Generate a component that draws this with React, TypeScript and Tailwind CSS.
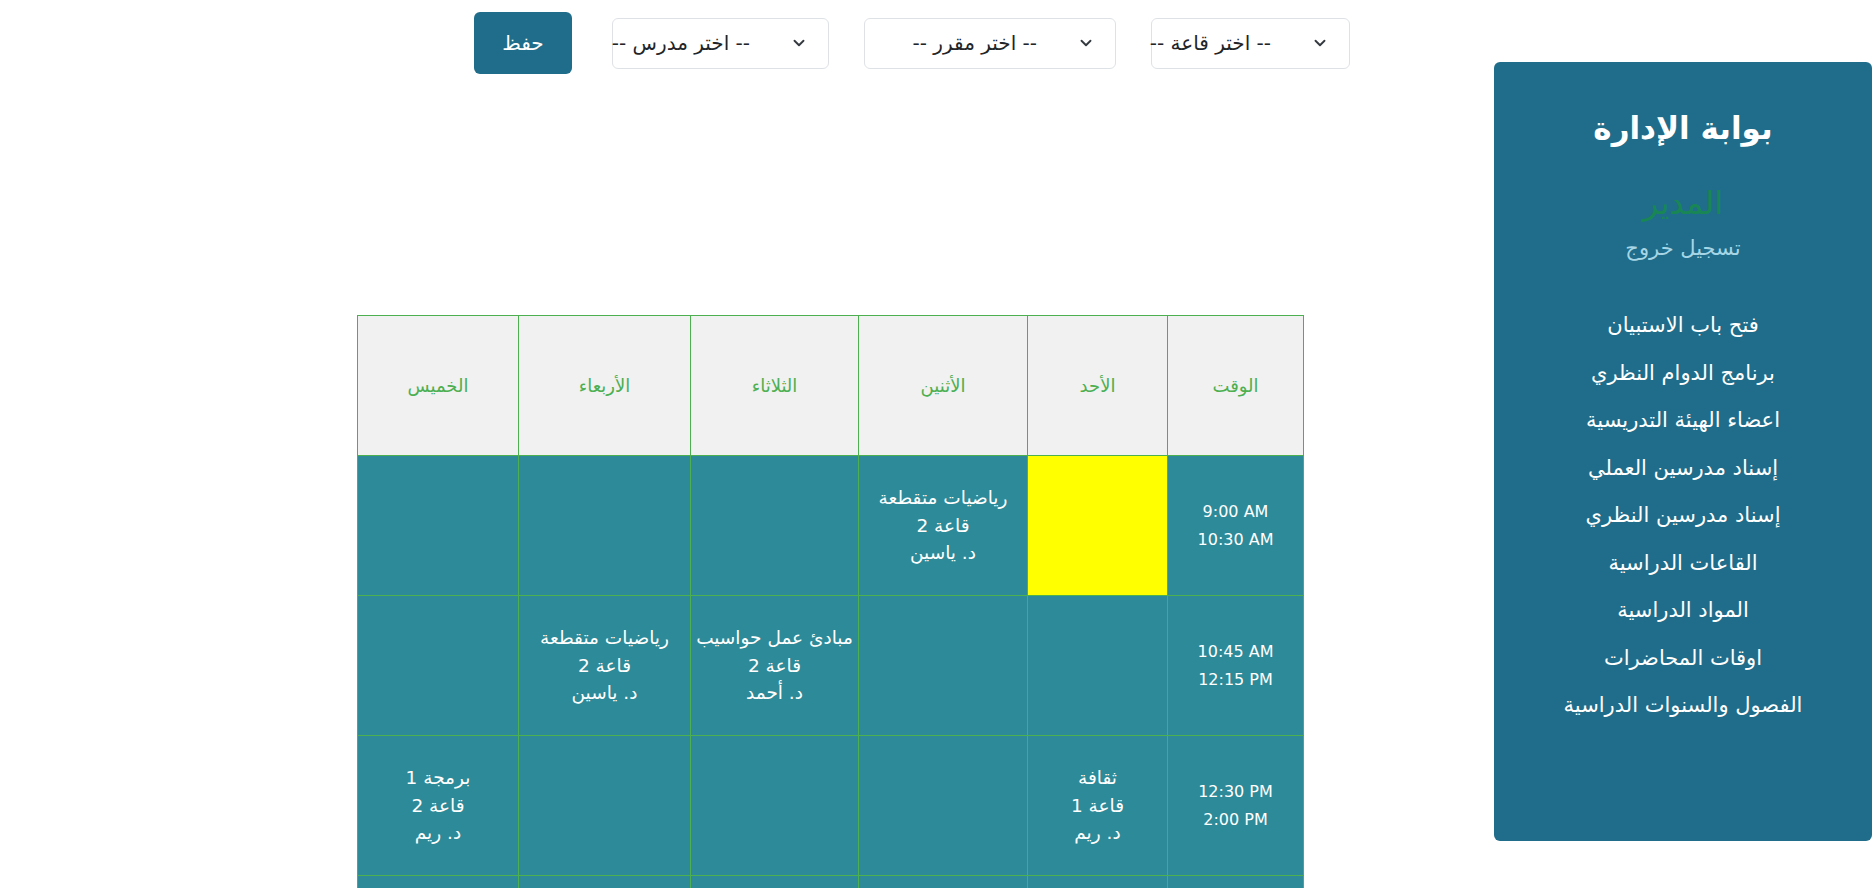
import { ChevronDown } from "lucide-react";

type Slot = { subject: string; room: string; teacher: string } | null;

type Row = {
  from: string;
  to: string;
  cells: Slot[]; // الأحد .. الخميس
  highlight?: number;
};

const DAYS = ["الأحد", "الأثنين", "الثلاثاء", "الأربعاء", "الخميس"];
const DAY_WIDTHS = ["w-[140px]", "w-[169px]", "w-[168px]", "w-[172px]", "w-[161px]"];

const ROWS: Row[] = [
  {
    from: "9:00 AM",
    to: "10:30 AM",
    highlight: 0,
    cells: [
      null,
      { subject: "رياضيات متقطعة", room: "قاعة 2", teacher: "د. ياسين" },
      null,
      null,
      null,
    ],
  },
  {
    from: "10:45 AM",
    to: "12:15 PM",
    cells: [
      null,
      null,
      { subject: "مبادئ عمل حواسيب", room: "قاعة 2", teacher: "د. أحمد" },
      { subject: "رياضيات متقطعة", room: "قاعة 2", teacher: "د. ياسين" },
      null,
    ],
  },
  {
    from: "12:30 PM",
    to: "2:00 PM",
    cells: [
      { subject: "ثقافة", room: "قاعة 1", teacher: "د. ريم" },
      null,
      null,
      null,
      { subject: "برمجة 1", room: "قاعة 2", teacher: "د. ريم" },
    ],
  },
  // next slot sits below the fold
  { from: "", to: "", cells: [null, null, null, null, null] },
];

const MENU = [
  "فتح باب الاستبيان",
  "برنامج الدوام النظري",
  "اعضاء الهيئة التدريسية",
  "إسناد مدرسين العملي",
  "إسناد مدرسين النظري",
  "القاعات الدراسية",
  "المواد الدراسية",
  "اوقات المحاضرات",
  "الفصول والسنوات الدراسية",
];

function FakeSelect({ label, width }: { label: string; width: string }) {
  return (
    <div
      className={`${width} h-[51px] flex items-center gap-[40px] pr-[20px] border border-[#dee2e6] rounded-md bg-white text-[#212529] text-[20px]`}
    >
      <ChevronDown size={18} strokeWidth={2.5} className="text-[#343a40] shrink-0" />
      <span className="whitespace-nowrap">{label}</span>
    </div>
  );
}

export default function App() {
  return (
    <div
      dir="rtl"
      className="flex items-start min-h-screen bg-white font-['Segoe_UI','DejaVu_Sans',sans-serif]"
    >
      <aside className="shrink-0 mt-[62px] mr-px w-[378px] h-[779px] rounded-md bg-[#1f6d8a] flex flex-col items-center text-center">
        <h2 className="mt-[45px] text-[31px] leading-[43px] font-semibold text-white">
          بوابة الإدارة
        </h2>
        <div className="mt-[36px] text-[32px] leading-[34px] text-[#198754]">المدير</div>
        <a className="mt-[14px] text-[21px] leading-[28px] text-[#a6d6e6]">تسجيل خروج</a>
        <nav className="mt-[40px] flex flex-col">
          {MENU.map((m) => (
            <a key={m} className="text-[21px] leading-[47.5px] text-white">
              {m}
            </a>
          ))}
        </nav>
      </aside>

      <main className="flex-1">
        <div className="mr-[144px] pt-[12px] flex items-center gap-[35px]">
          <FakeSelect label="-- اختر قاعة --" width="w-[199px]" />
          <FakeSelect label="-- اختر مقرر --" width="w-[252px]" />
          <FakeSelect label="-- اختر مدرس --" width="w-[217px]" />
          <button className="mr-[5px] w-[98px] h-[62px] rounded-md bg-[#1f6d8a] text-white text-[20px]">
            حفظ
          </button>
        </div>

        <table className="mt-[241px] mr-[190px] w-[946px] table-fixed border-collapse border border-[#4caf50] text-center">
          <thead>
            <tr className="h-[140px] bg-[#f1f1f1]">
              <th className="w-[136px] border border-[#4caf50] font-normal text-[18px] text-[#4caf50]">
                الوقت
              </th>
              {DAYS.map((d, i) => (
                <th
                  key={d}
                  className={`${DAY_WIDTHS[i]} border border-[#4caf50] font-normal text-[18px] text-[#4caf50]`}
                >
                  {d}
                </th>
              ))}
            </tr>
          </thead>
          <tbody>
            {ROWS.map((row, r) => (
              <tr key={r} className="h-[140px] bg-[#2d8a98] text-white text-[18.5px] leading-[27.5px]">
                <td className="border border-[#4caf50] text-[16px] leading-[28px]">
                  <span dir="ltr" className="block">{row.from}</span>
                  <span dir="ltr" className="block">{row.to}</span>
                </td>
                {row.cells.map((c, i) => (
                  <td
                    key={i}
                    className={`border border-[#4caf50] ${row.highlight === i ? "bg-[#ffff00]" : ""}`}
                  >
                    {c && (
                      <>
                        {c.subject}
                        <br />
                        {c.room}
                        <br />
                        {c.teacher}
                      </>
                    )}
                  </td>
                ))}
              </tr>
            ))}
          </tbody>
        </table>
      </main>
    </div>
  );
}
